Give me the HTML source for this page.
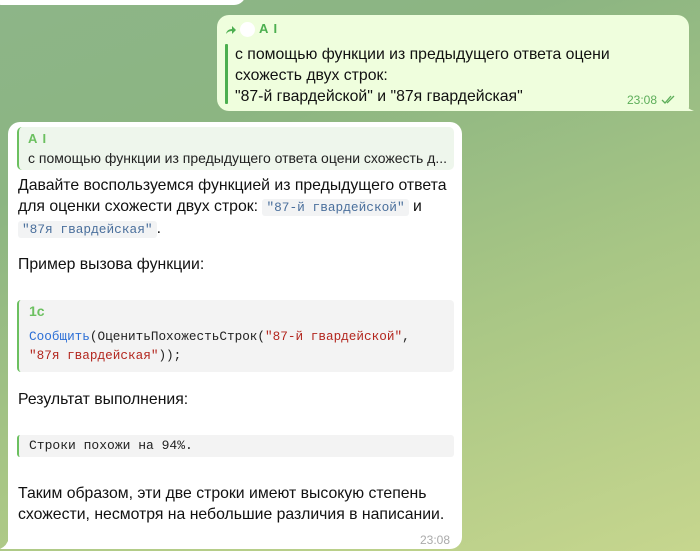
<!DOCTYPE html>
<html><head><meta charset="utf-8"><style>
*{margin:0;padding:0;box-sizing:border-box}
html,body{width:700px;height:551px;overflow:hidden}
body{position:relative;font-family:"Liberation Sans","Noto Sans CJK SC",sans-serif;background:linear-gradient(160deg,#8db588 0%,#8cb582 25%,#a8c685 60%,#c6d68e 100%);color:#000}
.abs{position:absolute}
.mono{font-family:"Liberation Mono","DejaVu Sans Mono",monospace}
</style></head><body>
<div class="abs" style="left:-10px;top:-20px;width:256px;height:25px;background:#fff;border-radius:0 0 12px 12px"></div>

<div class="abs" style="left:217px;top:15px;width:472px;height:96px;background:#effedd;border-radius:12px 12px 4px 12px"></div>
<svg class="abs" style="left:682px;top:100px" width="14" height="12"><path d="M0 0 Q3 8 12 11 L0 11 Z" fill="#effedd"/></svg>
<svg class="abs" style="left:225px;top:25px" width="12" height="10"><path d="M1 9 Q2 4 7 4 L7 1 L11 5 L7 9 L7 6 Q3 6 1 9Z" fill="#4caf50"/></svg>
<div class="abs" style="left:240px;top:22px;width:15px;height:15px;border-radius:50%;background:#fff"></div>
<div class="abs" style="left:259px;top:21px;font-size:13px;font-weight:bold;color:#4caf50;letter-spacing:1px">A I</div>
<div class="abs" style="left:225px;top:44px;width:2.5px;height:60px;background:#4caf50;border-radius:1px"></div>
<div class="abs" style="left:235px;top:44px;font-size:15.8px;line-height:21px;color:#111;white-space:nowrap">с помощью функции из предыдущего ответа оцени<br>схожесть двух строк:<br>"87-й гвардейской" и "87я гвардейская"</div>
<div class="abs" style="left:627px;top:93px;font-size:12px;color:#5dae5a">23:08</div>
<svg class="abs" style="left:661px;top:94px" width="18" height="11"><path d="M1 6 L4 9 L10 2 M6 9 L13 2" stroke="#5dae5a" stroke-width="1.3" fill="none"/></svg>

<div class="abs" style="left:8px;top:122px;width:454px;height:427px;background:#fff;border-radius:12px 12px 12px 4px"></div>
<svg class="abs" style="left:0px;top:538px" width="12" height="12"><path d="M12 0 L12 11 L0 11 Q7 8 9 0Z" fill="#fff"/></svg>
<div class="abs" style="left:17px;top:127px;width:437px;height:43px;background:#eef6ec;border-radius:5px;border-left:2.5px solid #6cc060"></div>
<div class="abs" style="left:28px;top:131px;font-size:13px;font-weight:bold;color:#6cc060;letter-spacing:1px">A I</div>
<div class="abs" style="left:28px;top:150px;font-size:14px;color:#222;white-space:nowrap">с помощью функции из предыдущего ответа оцени схожесть д...</div>

<div class="abs" style="left:18px;top:175px;font-size:15.8px;line-height:21px;color:#111;white-space:nowrap">Давайте воспользуемся функцией из предыдущего ответа<br>для оценки схожести двух строк: <span class="mono" style="background:#f2f3f4;color:#4a6f9c;font-size:12.8px;padding:1px 4px;border-radius:3px">"87-й гвардейской"</span> и<br><span class="mono" style="background:#f2f3f4;color:#4a6f9c;font-size:12.8px;padding:1px 4px;border-radius:3px">"87я гвардейская"</span>.</div>
<div class="abs" style="left:18px;top:256px;font-size:15.8px;color:#111">Пример вызова функции:</div>

<div class="abs" style="left:17px;top:300px;width:437px;height:72px;background:#f3f3f3;border-radius:4px;border-left:2.5px solid #6cc060"></div>
<div class="abs" style="left:29px;top:303px;font-size:14px;font-weight:bold;color:#6cc060">1c</div>
<div class="abs mono" style="left:29px;top:327px;font-size:12.7px;line-height:19px;color:#222;white-space:nowrap"><span style="color:#2c6fd6">Сообщить</span>(ОценитьПохожестьСтрок(<span style="color:#b3261e">"87-й гвардейской"</span>,<br><span style="color:#b3261e">"87я гвардейская"</span>));</div>

<div class="abs" style="left:18px;top:391px;font-size:15.8px;color:#111">Результат выполнения:</div>
<div class="abs" style="left:17px;top:435px;width:437px;height:22px;background:#f3f3f3;border-radius:3px;border-left:2.5px solid #6cc060"></div>
<div class="abs mono" style="left:29px;top:438px;font-size:13px;color:#222">Строки похожи на 94%.</div>

<div class="abs" style="left:18px;top:483px;font-size:15.8px;line-height:21px;color:#111;white-space:nowrap">Таким образом, эти две строки имеют высокую степень<br>схожести, несмотря на небольшие различия в написании.</div>
<div class="abs" style="left:420px;top:533px;font-size:12px;color:#aaa">23:08</div>
</body></html>
